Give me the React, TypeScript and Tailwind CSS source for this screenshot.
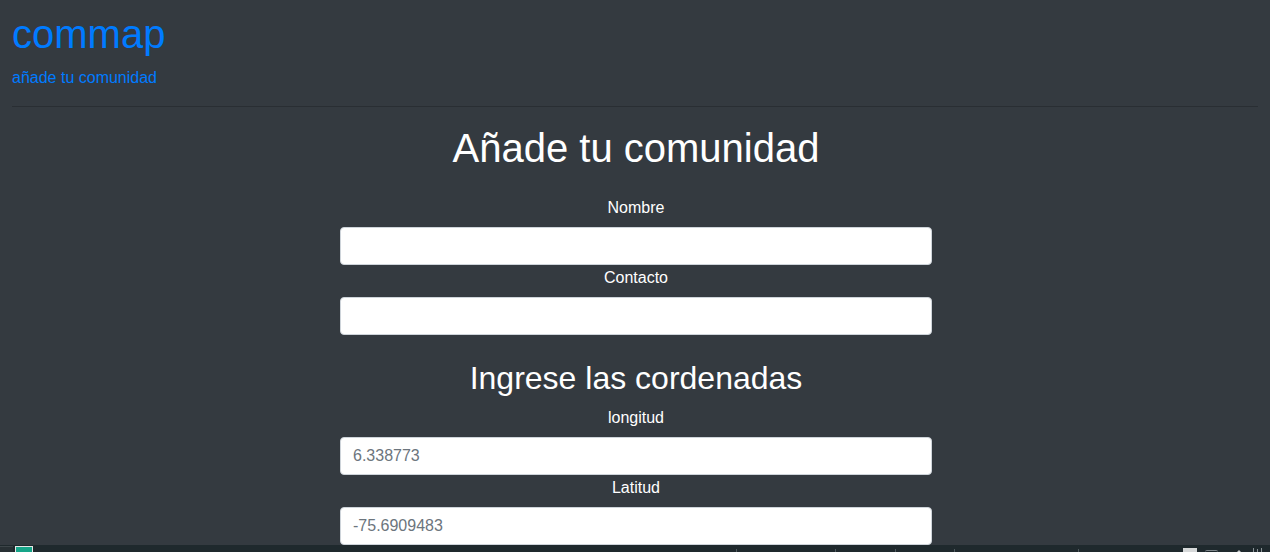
import React from "react";

function Field({ label, placeholder }: { label: string; placeholder?: string }) {
  return (
    <>
      <label className="mb-[7px] block pt-[1px] text-center text-base leading-6 text-white">{label}</label>
      <input
        type="text"
        placeholder={placeholder}
        className="block h-[38px] w-full rounded border border-[#ced4da] bg-white px-3 text-base text-[#495057] outline-none placeholder:text-[#6c757d]"
      />
    </>
  );
}

function Taskbar() {
  return (
    <div className="flex h-[7px] shrink-0 items-end bg-[#1f292d]">
      <div className="h-[6px] w-[13px] border-t border-[#3d4549] bg-[#283034]" />
      <div className="ml-[2px] h-[6px] w-[18px] border-x border-t border-[#e6e6e6] bg-[#17a589]" />
      <div className="ml-[703px] h-[3px] w-px bg-[#4f5a5e]" />
      <div className="ml-[98px] h-[3px] w-px bg-[#4f5a5e]" />
      <div className="ml-[59px] h-[3px] w-px bg-[#4f5a5e]" />
      <div className="ml-[58px] h-[3px] w-px bg-[#4f5a5e]" />
      <div className="ml-[123px] h-[3px] w-px bg-[#4f5a5e]" />
      <div className="ml-[104px] h-[4px] w-[14px] bg-[#d6d8d9]" />
      <div className="ml-[8px] h-[2px] w-[13px] rounded-t-full border-t border-[#7c8589]" />
      <div className="ml-[19px] h-[4px] w-[4px] border-x-2 border-b-2 border-x-transparent border-b-[#c8cccd]" />
      <div className="ml-[12px] flex h-[4px] w-[12px] items-end gap-[3px]">
        <div className="h-[4px] w-px bg-[#8a9296]" />
        <div className="h-[3px] w-px bg-[#8a9296]" />
        <div className="h-[4px] w-px bg-[#8a9296]" />
      </div>
    </div>
  );
}

export default function App() {
  return (
    <div className="flex h-[552px] flex-col overflow-hidden bg-[#343a40] font-['Liberation_Sans',Arial,sans-serif]">
      <div className="flex-1 overflow-hidden px-3 pt-[10px]">
        <h1 className="mb-2 text-[40px] leading-[48px] text-[#007bff]">commap</h1>
        <p className="mt-[1px] text-base leading-6 text-[#007bff]">añade tu comunidad</p>
        <hr className="mb-[17px] mt-4 border-t border-black/20" />

        <div className="pl-[2px]">
          <h1 className="mb-2 text-center text-[40px] leading-[48px] text-white">Añade tu comunidad</h1>

          <form className="mx-auto mt-[23px] w-[592px]">
            <Field label="Nombre" />
            <Field label="Contacto" />

            <h2 className="mb-2 mt-6 text-center text-[32px] leading-[38px] text-white">Ingrese las cordenadas</h2>

            <Field label="longitud" placeholder="6.338773" />
            <Field label="Latitud" placeholder="-75.6909483" />
          </form>
        </div>
      </div>
      <Taskbar />
    </div>
  );
}
